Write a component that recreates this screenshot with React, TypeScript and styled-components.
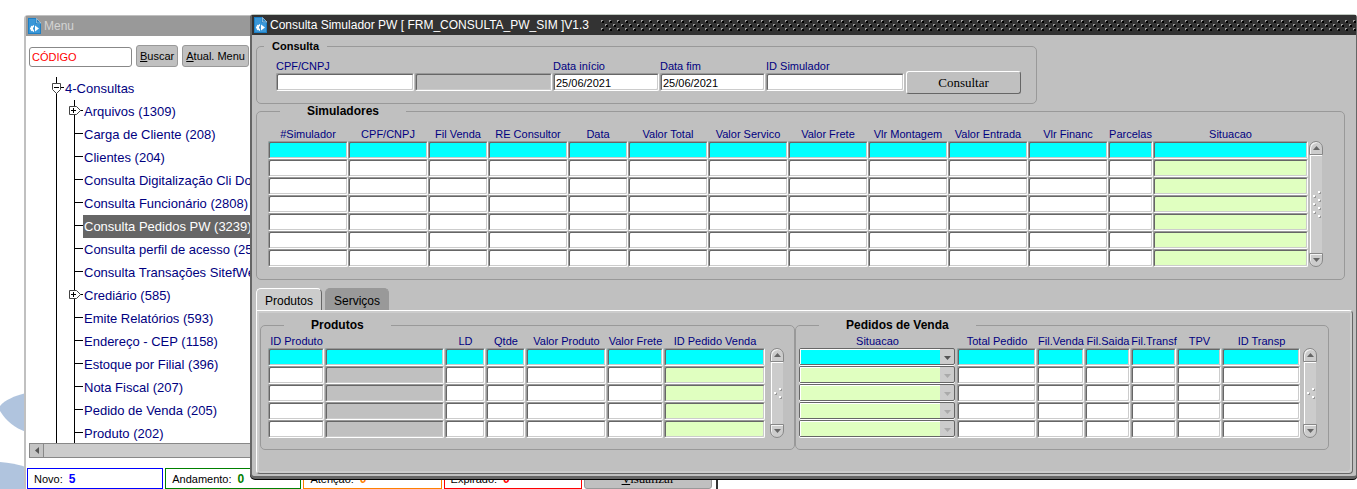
import React, { useState } from "react";
import styled, { createGlobalStyle, css } from "styled-components";

const GlobalStyle = createGlobalStyle`
  *, *::before, *::after { box-sizing: border-box; }
  body {
    margin: 0;
    background: #fff;
    font-family: "Liberation Sans", Arial, sans-serif;
    font-size: 11px;
    color: #000;
  }
  button, input, select { font: inherit; color: inherit; margin: 0; }
`;

const NAVY = "#000080";
const FACE = "#c0c0c0";

/* ---------- desktop and windows ---------- */

const Desktop = styled.div`
  position: relative;
  height: 100vh;
  overflow: hidden;
`;

const Wallpaper = styled.svg`
  position: absolute;
  left: 0;
  bottom: 0;
`;

const MenuWindow = styled.section`
  position: absolute;
  left: 24px;
  top: 15px;
  bottom: 0;
  width: 694px;
  display: flex;
  flex-direction: column;
  background: #fff;
  border: solid ${FACE};
  border-width: 1px 2px 0;
  border-radius: 4px 4px 0 0;
  border-right-color: #333;
`;

const FormWindow = styled.section`
  position: absolute;
  left: 250px;
  right: 0;
  top: 14px;
  background: ${FACE};
  border: solid #666;
  border-width: 1px 1px 3px 2px;
  border-top-color: #c0c8c0;
  border-radius: 4px 4px 4px 5px;
  box-shadow: 0 1px 0 #000;
`;

const TitleBar = styled.header<{ $active?: boolean }>`
  display: flex;
  align-items: center;
  flex: none;
  height: 20px;
  padding-left: 2px;
  gap: 3px;
  background: ${(p) => (p.$active ? "#333" : "#999")};
  color: ${(p) => (p.$active ? "#fff" : "#d4d4d4")};
`;

const Title = styled.h1`
  margin: 0;
  font-size: 12px;
  line-height: 20px;
  font-weight: 400;
  white-space: nowrap;
`;

const Grip = styled.svg`
  flex: 1;
  min-width: 0;
  height: 11px;
  margin-left: 8px;
`;

const FormIcon = () => (
  <svg width="13" height="16" viewBox="0 0 13 16" aria-hidden="true">
    <path d="M0 0h8l5 5v11H0z" fill="#1d7fc4" />
    <path d="M1 1h6.500v5H12v9H1z" fill="#3a97d8" />
    <path d="M8.500 0.500v4.500H13z" fill="#2a86c6" stroke="#c8d8e4" strokeWidth="0.600" />
    <path d="M7 7.500L11 10.500L7 13.500z" fill="#fff" />
    <path
      d="M6 7.300H4.800V8.200L3.600 7.700L2.700 8.800L3.300 9.600H2V11.400H3.300L2.700 12.300L3.600 13.300L4.800 12.800V13.700H6V12A1.600 1.600 0 0 1 6 9z"
      fill="#fff"
    />
  </svg>
);

/* ---------- menu window ---------- */

const SearchBar = styled.form`
  display: flex;
  align-items: flex-end;
  gap: 4px;
  padding: 9px 3px 0;
`;

const CodeInput = styled.input`
  width: 103px;
  height: 20px;
  padding: 0 2px;
  border: 1px solid #888;
  border-radius: 3px;
  background: #fff;
  color: #f00;
  line-height: 16px;
`;

const FlatButton = styled.button`
  height: 22px;
  padding: 0 3px;
  border: 1px solid #999;
  border-radius: 3px;
  background: ${FACE};
  white-space: nowrap;
`;

const Tree = styled.ul`
  flex: 1;
  min-height: 0;
  overflow: hidden;
  margin: 10px 0 0;
  padding: 0 0 0 23px;
  list-style: none;
  color: ${NAVY};
  font-size: 13px;
`;

const SubTree = styled.ul`
  margin: 0;
  padding: 0;
  list-style: none;
`;

const TreeRow = styled.div`
  display: flex;
  height: 23px;
  svg { flex: none; }
`;

const TreeLabel = styled.a<{ $selected?: boolean }>`
  line-height: 23px;
  height: 23px;
  padding-left: 1px;
  white-space: nowrap;
  text-decoration: none;
  color: ${(p) => (p.$selected ? "#fff" : NAVY)};
  background: ${(p) => (p.$selected ? "#666" : "transparent")};
`;

const HScroll = styled.div`
  display: flex;
  flex: none;
  height: 15px;
  margin-left: 3px;
  background: #ccc;
  border: solid #888;
  border-width: 1px 0;
`;

const HScrollButton = styled.button`
  display: flex;
  align-items: center;
  justify-content: center;
  width: 15px;
  padding: 0;
  border: solid #888;
  border-width: 0 1px;
  background: #c4c4c4;
`;

const StatusBar = styled.div`
  display: grid;
  grid-template-columns: 136fr 136fr 138fr 138fr 128fr;
  gap: 2px;
  flex: none;
  padding: 10px 4px 0 1px;
`;

const StatusBox = styled.div<{ $color: string }>`
  display: flex;
  align-items: center;
  gap: 6px;
  height: 21px;
  padding-left: 6px;
  border: 1px solid ${(p) => p.$color};
  background: #fff;
  strong { font-size: 12px; color: ${(p) => p.$color}; }
`;

const ViewButton = styled(FlatButton)`
  height: 21px;
  font-family: "Liberation Serif", "Times New Roman", serif;
  font-size: 13px;
`;

/* ---------- form window ---------- */

const FormBody = styled.div`
  padding: 4px 3px 2px 4px;
`;

const Group = styled.fieldset<{ $basis?: number }>`
  min-width: 0;
  margin: 0;
  padding: 0;
  border: 1px solid #999;
  border-radius: 5px;
  ${(p) => p.$basis && css`flex: 1 1 ${p.$basis}px;`}
`;

const QueryGroup = styled(Group)`
  width: fit-content;
  > legend { margin-left: 7px; padding: 0 8px; font-size: 11px; }
`;

const SimuladoresGroup = styled(Group)`
  margin-right: 8px;
`;

const Legend = styled.legend`
  height: 14px;
  margin-left: 23px;
  padding: 0 27px;
  font-size: 12px;
  line-height: 14px;
  font-weight: 700;
`;

const QueryRow = styled.div`
  display: flex;
  align-items: flex-end;
  gap: 1px;
  padding: 7px 15px 9px 19px;
`;

const Field = styled.div`
  display: flex;
  flex-direction: column;
  padding-bottom: 3px;
`;

const FieldLabel = styled.label`
  height: 13px;
  line-height: 12px;
  color: ${NAVY};
`;

const sunken = css`
  height: 18px;
  border: 1px solid;
  border-color: #999 #fff #fff #999;
  border-radius: 2px;
  box-shadow: inset 1px 1px 0 #666, inset -1px -1px 0 #ccc;
`;

const TextBox = styled.input<{ $width: number }>`
  ${sunken}
  width: ${(p) => p.$width}px;
  padding: 1px 2px 0;
  background: #fff;
  outline: none;
  &:read-only { background: ${FACE}; }
`;

const QueryButton = styled.button`
  width: 115px;
  height: 23px;
  margin-left: 1px;
  padding: 0;
  border: 1px solid;
  border-color: #fff #666 #666 #fff;
  border-radius: 3px;
  background: ${FACE};
  font-family: "Liberation Serif", "Times New Roman", serif;
  font-size: 13px;
`;

const GridArea = styled.div<{ $pad: string; $gap: number }>`
  display: flex;
  align-items: flex-start;
  gap: ${(p) => p.$gap}px;
  padding: ${(p) => p.$pad};
`;

const Table = styled.table`
  flex: 1;
  width: 0;
  min-width: 0;
  table-layout: fixed;
  border-collapse: separate;
  border-spacing: 0;
  th {
    height: 14px;
    padding: 0;
    font-weight: 400;
    line-height: 14px;
    color: ${NAVY};
    white-space: nowrap;
    text-align: center;
  }
  td { height: 18px; padding: 0; }
`;

const Cell = styled.div<{ $spaced?: boolean }>`
  display: flex;
  padding-right: ${(p) => (p.$spaced ? 1 : 0)}px;
`;

const CellInput = styled.input<{ $fill: string }>`
  ${sunken}
  flex: 1;
  width: 100%;
  min-width: 0;
  padding: 0 2px;
  outline: none;
  background: ${(p) => p.$fill};
`;

const CellSelect = styled.div<{ $fill: string; $active: boolean }>`
  display: flex;
  align-items: center;
  flex: 1;
  height: 17px;
  margin: 0 1px 1px;
  border: 1px solid #666;
  border-radius: 2px;
  background: #ccc;
  box-shadow: 0 1px 0 #fff;
  color: ${(p) => (p.$active ? "#555" : "#aaa")};
  select {
    appearance: none;
    flex: 1;
    min-width: 0;
    height: 15px;
    padding: 0;
    border: solid #fff;
    border-width: 1px 0 0 1px;
    border-radius: 0;
    outline: none;
    background: ${(p) => p.$fill};
    opacity: 1;
  }
  svg { flex: none; margin: 3px 3px 0 4px; }
`;

const VScroll = styled.div`
  display: flex;
  flex-direction: column;
  align-self: stretch;
  flex: none;
  width: 14px;
  margin-top: 14px;
`;

const VTrack = styled.div`
  flex: 1;
  display: flex;
  align-items: center;
  justify-content: center;
  margin: 0 1px;
  background: #ccc;
  border: solid #fff;
  border-width: 1px 0 0 1px;
`;

const VButton = styled.button<{ $down?: boolean }>`
  display: flex;
  align-items: center;
  justify-content: center;
  height: 14px;
  padding: 0;
  border: 1px solid #888;
  border-radius: ${(p) => (p.$down ? "0 0 7px 7px" : "7px 7px 0 0")};
  background: #ccc;
  box-shadow: inset 1px 1px 0 #f4f4f4;
  color: #666;
`;

const Tabs = styled.div`
  display: flex;
  gap: 3px;
  margin-top: 8px;
`;

const Tab = styled.button<{ $active: boolean }>`
  height: 22px;
  padding: 2px 8px 0;
  border: 1px solid;
  border-bottom: 0;
  border-color: ${(p) => (p.$active ? "#fff #666 #fff #fff" : "#999")};
  border-radius: 5px 5px 0 0;
  background: ${(p) => (p.$active ? "#ccc" : "#999")};
  font-size: 12px;
`;

const TabPanel = styled.div`
  display: flex;
  align-items: flex-start;
  padding: 7px 23px 23px 3px;
  border: 1px solid;
  border-color: #fff #666 #666 #fff;
  border-radius: 0 4px 4px 4px;
  box-shadow: inset 2px 2px 0 #ccc, inset -2px -2px 0 #ccc;
`;

/* ---------- parts ---------- */

const Arrow = ({ down }: { down?: boolean }) => (
  <svg width="7" height="4" viewBox="0 0 7 4" aria-hidden="true">
    <path d={down ? "M0 0h7L3.500 4z" : "M3.500 0L7 4H0z"} fill="currentColor" />
  </svg>
);

const ScrollBar = ({ dots }: { dots: number }) => (
  <VScroll>
    <VButton type="button" aria-label="Rolar para cima">
      <Arrow />
    </VButton>
    <VTrack>
      <svg width="9" height={dots * 4} aria-hidden="true">
        {Array.from({ length: dots }, (_, i) => {
          const x = i % 2 ? 1 : 6;
          return (
            <g key={i}>
              <rect x={x + 1} y={i * 4 + 1} width="2" height="2" fill="#999" />
              <rect x={x} y={i * 4} width="2" height="2" fill="#fff" />
            </g>
          );
        })}
      </svg>
    </VTrack>
    <VButton type="button" $down aria-label="Rolar para baixo">
      <Arrow down />
    </VButton>
  </VScroll>
);

type Kind = "text" | "gray" | "green" | "select";
type Column = { name: string; width?: number; kind?: Kind };

const FILLS: Record<Kind, string> = {
  text: "#fff",
  gray: FACE,
  green: "#e0ffc0",
  select: "#e0ffc0",
};

const DataGrid = ({
  label,
  columns,
  rows,
  spaced,
}: {
  label: string;
  columns: Column[];
  rows: number;
  spaced?: boolean;
}) => (
  <Table aria-label={label}>
    <colgroup>
      {columns.map((c, i) => (
        <col key={i} width={c.width} />
      ))}
    </colgroup>
    <thead>
      <tr>
        {columns.map((c, i) => (
          <th key={i} scope="col">{c.name}</th>
        ))}
      </tr>
    </thead>
    <tbody>
      {Array.from({ length: rows }, (_, r) => (
        <tr key={r}>
          {columns.map((c, i) => {
            const kind = c.kind ?? "text";
            const fill = r === 0 ? "#0ff" : FILLS[kind];
            const name = `${c.name || "Descrição"} ${r + 1}`;
            return (
              <td key={i}>
                <Cell $spaced={spaced}>
                  {kind === "select" ? (
                    <CellSelect $fill={fill} $active={r === 0}>
                      <select aria-label={name} disabled={r > 0}>
                        <option value="" />
                      </select>
                      <Arrow down />
                    </CellSelect>
                  ) : (
                    <CellInput $fill={fill} aria-label={name} />
                  )}
                </Cell>
              </td>
            );
          })}
        </tr>
      ))}
    </tbody>
  </Table>
);

const SIMULADORES: Column[] = [
  { name: "#Simulador", width: 80 },
  { name: "CPF/CNPJ", width: 80 },
  { name: "Fil Venda", width: 60 },
  { name: "RE Consultor", width: 80 },
  { name: "Data", width: 60 },
  { name: "Valor Total", width: 80 },
  { name: "Valor Servico", width: 80 },
  { name: "Valor Frete", width: 80 },
  { name: "Vlr Montagem", width: 80 },
  { name: "Valor Entrada", width: 80 },
  { name: "Vlr Financ", width: 80 },
  { name: "Parcelas", width: 45 },
  { name: "Situacao", kind: "green" },
];

const PRODUTOS: Column[] = [
  { name: "ID Produto", width: 57 },
  { name: "", kind: "gray" },
  { name: "LD", width: 41 },
  { name: "Qtde", width: 40 },
  { name: "Valor Produto", width: 81 },
  { name: "Valor Frete", width: 57 },
  { name: "ID Pedido Venda", width: 102, kind: "green" },
];

const PEDIDOS: Column[] = [
  { name: "Situacao", kind: "select" },
  { name: "Total Pedido", width: 80 },
  { name: "Fil.Venda", width: 48 },
  { name: "Fil.Saida", width: 46 },
  { name: "Fil.Transf", width: 46 },
  { name: "TPV", width: 45 },
  { name: "ID Transp", width: 79 },
];

const MENU_ITEMS: { text: string; expandable?: boolean; selected?: boolean }[] = [
  { text: "Arquivos (1309)", expandable: true },
  { text: "Carga de Cliente (208)" },
  { text: "Clientes (204)" },
  { text: "Consulta Digitalização Cli Doc" },
  { text: "Consulta Funcionário (2808)" },
  { text: "Consulta Pedidos PW (3239)", selected: true },
  { text: "Consulta perfil de acesso (25)" },
  { text: "Consulta Transações SitefWeb" },
  { text: "Crediário (585)", expandable: true },
  { text: "Emite Relatórios (593)" },
  { text: "Endereço - CEP (1158)" },
  { text: "Estoque por Filial (396)" },
  { text: "Nota Fiscal (207)" },
  { text: "Pedido de Venda (205)" },
  { text: "Produto (202)" },
];

const RootBranch = () => (
  <svg width="15" height="23" aria-hidden="true">
    <path d="M7.500 0v23M12 10.500h3" stroke="#000" />
    <path d="M3.500 6.500h8v6l-4 4l-4-4z" fill="#fff" stroke="#444" />
    <path d="M5 10.500h5" stroke="#000" />
  </svg>
);

const ItemBranch = ({ expandable }: { expandable?: boolean }) => (
  <svg width="34" height="23" aria-hidden="true">
    <path d="M7.500 0v23M25.500 0v23M25 10.500h9" stroke="#000" />
    {expandable && (
      <>
        <path d="M20.500 6.500h7l4 4l-4 4h-7z" fill="#fff" stroke="#444" />
        <path d="M22 10.500h5M24.500 8v5" stroke="#000" />
      </>
    )}
  </svg>
);

const STATUS = [
  { label: "Novo:", value: 5, color: "#0000ff" },
  { label: "Andamento:", value: 0, color: "#008000" },
  { label: "Atenção:", value: 0, color: "#ff8000" },
  { label: "Expirado:", value: 0, color: "#ff0000" },
];

const QUERY_FIELDS = [
  { id: "cpf", label: "CPF/CNPJ", width: 138, value: "" },
  { id: "nome", label: "", width: 137, value: "", readOnly: true },
  { id: "inicio", label: "Data início", width: 106, value: "25/06/2021" },
  { id: "fim", label: "Data fim", width: 105, value: "25/06/2021" },
  { id: "simulador", label: "ID Simulador", width: 138, value: "" },
];

export default function App() {
  const [tab, setTab] = useState("Produtos");

  return (
    <>
      <GlobalStyle />
      <Desktop>
        <Wallpaper width="26" height="100" viewBox="0 0 26 100" aria-hidden="true">
          <path d="M26 4C14 7 5 11 0 17V22C6 32 15 39 26 43z" fill="#b0c4de" />
          <path d="M0 73Q14 74 26 78V100H0z" fill="#b0c4de" />
        </Wallpaper>

        <MenuWindow>
          <TitleBar>
            <FormIcon />
            <Title as="h2">Menu</Title>
          </TitleBar>
          <SearchBar onSubmit={(e) => e.preventDefault()}>
            <CodeInput aria-label="Código" defaultValue="CÓDIGO" />
            <FlatButton type="submit"><u>B</u>uscar</FlatButton>
            <FlatButton type="button"><u>A</u>tual. Menu</FlatButton>
          </SearchBar>
          <Tree>
            <li>
              <TreeRow>
                <RootBranch />
                <TreeLabel href="#consultas">4-Consultas</TreeLabel>
              </TreeRow>
              <SubTree>
                {MENU_ITEMS.map((item) => (
                  <li key={item.text}>
                    <TreeRow>
                      <ItemBranch expandable={item.expandable} />
                      <TreeLabel href="#item" $selected={item.selected}>{item.text}</TreeLabel>
                    </TreeRow>
                  </li>
                ))}
              </SubTree>
            </li>
          </Tree>
          <HScroll>
            <HScrollButton type="button" aria-label="Rolar para a esquerda">
              <svg width="4" height="7" aria-hidden="true">
                <path d="M4 0v7L0 3.500z" fill="#555" />
              </svg>
            </HScrollButton>
          </HScroll>
          <StatusBar>
            {STATUS.map((s) => (
              <StatusBox key={s.label} $color={s.color}>
                {s.label} <strong>{s.value}</strong>
              </StatusBox>
            ))}
            <ViewButton type="button"><u>V</u>isualizar</ViewButton>
          </StatusBar>
        </MenuWindow>

        <FormWindow>
          <TitleBar $active>
            <FormIcon />
            <Title>Consulta Simulador PW [ FRM_CONSULTA_PW_SIM ]V1.3</Title>
            <Grip aria-hidden="true">
              <defs>
                <pattern id="grip" width="8" height="8" patternUnits="userSpaceOnUse">
                  <path d="M2 1h2v2h-2zM6 5h2v2h-2z" fill="#000" />
                  <path d="M1 0h2v1h-1v1h-1zM5 4h2v1h-1v1h-1z" fill="#999" />
                </pattern>
              </defs>
              <rect width="100%" height="100%" fill="url(#grip)" />
            </Grip>
          </TitleBar>
          <FormBody>
            <QueryGroup>
              <Legend>Consulta</Legend>
              <QueryRow>
                {QUERY_FIELDS.map((f) => (
                  <Field key={f.id}>
                    <FieldLabel htmlFor={f.id}>{f.label}</FieldLabel>
                    <TextBox
                      id={f.id}
                      $width={f.width}
                      defaultValue={f.value}
                      readOnly={f.readOnly}
                      aria-label={f.label || "Nome do cliente"}
                    />
                  </Field>
                ))}
                <QueryButton type="button">Consultar</QueryButton>
              </QueryRow>
            </QueryGroup>

            <SimuladoresGroup>
              <Legend>Simuladores</Legend>
              <GridArea $pad="9px 21px 12px 11px" $gap={1}>
                <DataGrid label="Simuladores" columns={SIMULADORES} rows={7} />
                <ScrollBar dots={7} />
              </GridArea>
            </SimuladoresGroup>

            <Tabs role="tablist">
              {["Produtos", "Serviços"].map((name) => (
                <Tab
                  key={name}
                  type="button"
                  role="tab"
                  aria-selected={tab === name}
                  $active={tab === name}
                  onClick={() => setTab(name)}
                >
                  {name}
                </Tab>
              ))}
            </Tabs>
            <TabPanel role="tabpanel">
              <Group $basis={535}>
                <Legend>Produtos</Legend>
                <GridArea $pad="2px 10px 11px 7px" $gap={4}>
                  <DataGrid label="Produtos" columns={PRODUTOS} rows={5} spaced />
                  <ScrollBar dots={3} />
                </GridArea>
              </Group>
              <Group $basis={534}>
                <Legend>Pedidos de Venda</Legend>
                <GridArea $pad="2px 11px 11px 2px" $gap={2}>
                  <DataGrid label="Pedidos de Venda" columns={PEDIDOS} rows={5} spaced />
                  <ScrollBar dots={3} />
                </GridArea>
              </Group>
            </TabPanel>
          </FormBody>
        </FormWindow>
      </Desktop>
    </>
  );
}
